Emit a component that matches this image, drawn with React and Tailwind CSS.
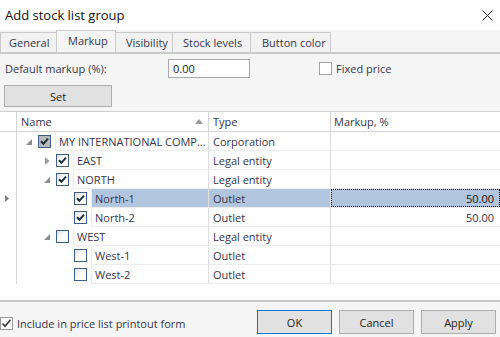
import React from "react";

const rows = [
  { level: 0, name: "MY INTERNATIONAL COMP...", type: "Corporation", markup: "", arrow: "expanded", check: "gray" },
  { level: 1, name: "EAST", type: "Legal entity", markup: "", arrow: "collapsed", check: "checked" },
  { level: 1, name: "NORTH", type: "Legal entity", markup: "", arrow: "expanded", check: "checked" },
  { level: 2, name: "North-1", type: "Outlet", markup: "50.00", arrow: null, check: "checked", selected: true },
  { level: 2, name: "North-2", type: "Outlet", markup: "50.00", arrow: null, check: "checked" },
  { level: 1, name: "WEST", type: "Legal entity", markup: "", arrow: "expanded", check: "unchecked" },
  { level: 2, name: "West-1", type: "Outlet", markup: "", arrow: null, check: "unchecked" },
  { level: 2, name: "West-2", type: "Outlet", markup: "", arrow: null, check: "unchecked" },
];

const indentClass = ["w-[3px]", "w-[21px]", "w-[39px]"];

function TreeCheck({ kind }) {
  const fill = kind === "gray" ? "#b9b9b9" : "#ffffff";
  return (
    <svg width="13" height="13" viewBox="0 0 13 13" className="block">
      <defs>
        <linearGradient id="cbg" x1="0" y1="0" x2="1" y2="1">
          <stop offset="0" stopColor="#dcdcdc" />
          <stop offset="0.5" stopColor="#ffffff" />
        </linearGradient>
      </defs>
      <rect x="0.5" y="0.5" width="12" height="12" fill={kind === "gray" ? fill : "url(#cbg)"} stroke="#3b5f8a" />
      {kind !== "unchecked" && (
        <path d="M3 6.3 L5.4 8.8 L10 3.6" fill="none" stroke="#17303f" strokeWidth="2" />
      )}
    </svg>
  );
}

function Arrow({ kind }) {
  if (kind === "expanded") {
    return (
      <svg width="6" height="6" viewBox="0 0 6 6" className="block">
        <path d="M6 0 L6 6 L0 6 Z" fill="#8c8c8c" />
      </svg>
    );
  }
  if (kind === "collapsed") {
    return (
      <svg width="5" height="8" viewBox="0 0 5 8" className="block">
        <path d="M0 0 L4.5 4 L0 8 Z" fill="#9c9c9c" />
      </svg>
    );
  }
  return null;
}

function TreeRow({ r }) {
  return (
    <div className="flex h-[19px] text-[#35354d]">
      <div className="w-[17px] shrink-0 border-r border-[#d6d6d6] flex items-center justify-center">
        {r.selected && (
          <svg width="4" height="7" viewBox="0 0 4 7" className="block ml-[-2px]">
            <path d="M0 0 L4 3.5 L0 7 Z" fill="#7c7c7c" />
          </svg>
        )}
      </div>
      <div className="w-[191px] shrink-0 flex">
        <div className={indentClass[r.level] + " shrink-0"} />
        <div className="w-[18px] shrink-0 flex items-center justify-center">
          <Arrow kind={r.arrow} />
        </div>
        <div className="w-[17px] shrink-0 flex items-center">
          <TreeCheck kind={r.check} />
        </div>
        <div
          className={
            "flex-1 min-w-0 border-l border-b border-[#ececec] flex items-center pl-[3px] whitespace-nowrap overflow-hidden " +
            (r.selected ? "bg-[#b2c5de]" : "")
          }
        >
          {r.name}
        </div>
      </div>
      <div
        className={
          "w-[122px] shrink-0 border-l border-b border-l-[#dedede] border-b-[#ececec] flex items-center pl-[4px] " +
          (r.selected ? "bg-[#b2c5de]" : "")
        }
      >
        {r.type}
      </div>
      <div className="flex-1 border-l border-b border-l-[#dedede] border-b-[#ececec] flex">
        {r.selected ? (
          <div className="flex-1 bg-[#b2c5de] border border-dotted border-black flex items-center justify-end pr-[5px] text-[#111]">
            {r.markup}
          </div>
        ) : (
          <div className="flex-1 flex items-center justify-end pr-[6px]">{r.markup}</div>
        )}
      </div>
    </div>
  );
}

function Tab({ label, selected, w, pl }) {
  return (
    <div
      className={
        "shrink-0 border border-b-0 border-[#c9c9c9] flex items-center " +
        w +
        " " +
        pl +
        (selected ? " h-[22px] bg-[#f5f5f5] self-end pb-[3px] -ml-px -mr-px z-10" : " h-[20px] bg-[#f2f2f2] self-end -mr-px")
      }
    >
      {label}
    </div>
  );
}

export default function App() {
  return (
    <div className="w-[500px] h-[337px] overflow-hidden bg-[#f5f5f5] flex flex-col font-['Open_Sans','Noto_Sans',sans-serif] text-[11px] text-[#35354d] leading-none">
      {/* title */}
      <div className="h-[30px] shrink-0 bg-white flex items-center justify-between pl-[5px] pr-[7px]">
        <span className="text-[13px] text-[#111]">Add stock list group</span>
        <svg width="11" height="11" viewBox="0 0 11 11" className="block">
          <path d="M0.5 0.5 L10.5 10.5 M10.5 0.5 L0.5 10.5" stroke="#222" strokeWidth="1" />
        </svg>
      </div>
      {/* tabs */}
      <div className="h-[24px] shrink-0 flex items-end border-b-2 border-[#c9c9c9] bg-[#f5f5f5]">
        <Tab label="General" w="w-[58px]" pl="pl-[8px]" />
        <Tab label="Markup" selected w="w-[60px]" pl="pl-[11px]" />
        <Tab label="Visibility" w="w-[58px]" pl="pl-[10px]" />
        <Tab label="Stock levels" w="w-[79px]" pl="pl-[10px]" />
        <Tab label="Button color" w="w-[81px]" pl="pl-[11px]" />
      </div>
      {/* form */}
      <div className="h-[57px] shrink-0 flex flex-col pl-[4px]">
        <div className="flex items-center mt-[5px] h-[19px]">
          <span className="w-[164px] pl-[1px] shrink-0">Default markup (%):</span>
          <div className="w-[82px] h-[19px] bg-white border border-[#a9a9a9] flex items-center pl-[4px] text-[#222]">0.00</div>
          <div className="ml-[69px] w-[13px] h-[13px] bg-white border border-[#a3a3a3]" />
          <span className="ml-[4px]">Fixed price</span>
        </div>
        <div className="mt-[7px] w-[108px] h-[22px] bg-[#e1e1e1] border border-[#adadad] flex items-center justify-center text-[#222]">
          Set
        </div>
      </div>
      {/* grid */}
      <div className="h-[189px] shrink-0 bg-white border-t border-[#cfcfcf] flex flex-col">
        <div className="h-[20px] shrink-0 flex border-b border-[#d6d6d6] text-[#35354d]">
          <div className="w-[17px] shrink-0 border-r border-[#d6d6d6]" />
          <div className="w-[191px] shrink-0 flex items-center justify-between pl-[4px] pr-[5px]">
            <span>Name</span>
            <svg width="8" height="5" viewBox="0 0 8 5" className="block">
              <path d="M0 5 L4 0 L8 5 Z" fill="#9a9a9a" />
            </svg>
          </div>
          <div className="w-[122px] shrink-0 border-l border-[#d6d6d6] flex items-center pl-[4px]">Type</div>
          <div className="flex-1 border-l border-[#d6d6d6] flex items-center pl-[3px]">Markup, %</div>
        </div>
        {rows.map((r, i) => (
          <TreeRow key={i} r={r} />
        ))}
      </div>
      {/* bottom */}
      <div className="flex-1 border-t-2 border-[#c9c9c9] flex items-start">
        <div className="flex items-center mt-[15px]">
          <svg width="13" height="13" viewBox="0 0 13 13" className="block">
            <rect x="0.5" y="0.5" width="12" height="12" fill="#fff" stroke="#9a9a9a" />
            <path d="M2.5 6.5 L5 9.2 L10.5 2.8" fill="none" stroke="#333" strokeWidth="1.6" />
          </svg>
          <span className="ml-[4px]">Include in price list printout form</span>
        </div>
        <div className="ml-auto flex gap-[7px] pr-[4px] mt-[8px] text-[#222]">
          <div className="w-[75px] h-[24px] bg-[#e1e1e1] border border-[#0078d7] flex items-center justify-center">OK</div>
          <div className="w-[75px] h-[24px] bg-[#e1e1e1] border border-[#adadad] flex items-center justify-center">Cancel</div>
          <div className="w-[75px] h-[24px] bg-[#e1e1e1] border border-[#adadad] flex items-center justify-center">Apply</div>
        </div>
      </div>
    </div>
  );
}
